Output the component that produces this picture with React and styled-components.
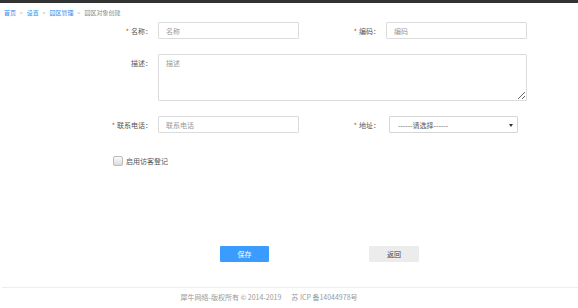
import React from "react";
import styled, { createGlobalStyle } from "styled-components";

const Global = createGlobalStyle`
  html, body { margin: 0; padding: 0; background: #fff; }
  body { font-family: "Noto Sans CJK SC", "Noto Sans", sans-serif; }
  * { box-sizing: border-box; }
`;

const Page = styled.div`
  width: 578px;
  height: 308px;
  display: flex;
  flex-direction: column;
  overflow: hidden;
`;

const TopBar = styled.div`
  height: 3px;
  background: #333;
`;

const Crumbs = styled.div`
  height: 19px;
  line-height: 20px;
  padding-left: 4px;
  font-size: 6px;
  color: #888;
  display: flex;
  align-items: center;
`;

const CrumbLink = styled.a`
  color: #2b8ff0;
  text-decoration: none;
`;

const Sep = styled.span`
  color: #999;
  margin: 0 4px;
  font-size: 5px;
`;

const Form = styled.div`
  display: flex;
  flex-direction: column;
`;

const Row = styled.div`
  display: flex;
  align-items: ${(p) => (p.$top ? "flex-start" : "center")};
  margin-top: ${(p) => p.$mt || 0}px;
`;

const Label = styled.label`
  width: ${(p) => p.$w}px;
  text-align: right;
  font-size: 7px;
  color: #555;
  margin-right: ${(p) => p.$gap}px;
  padding-top: ${(p) => (p.$top ? 4 : 0)}px;
  white-space: nowrap;
`;

const Star = styled.span`
  color: #e53935;
  margin-right: 2px;
`;

const Input = styled.input`
  width: ${(p) => p.$w}px;
  height: 17px;
  border: 1px solid #dcdcdc;
  border-radius: 1px;
  padding: 0 7px;
  font-size: 7px;
  font-family: inherit;
  color: #333;
  outline: none;
  &::placeholder { color: #999; }
`;

const TextArea = styled.textarea`
  width: 369px;
  height: 47px;
  border: 1px solid #dcdcdc;
  border-radius: 1px;
  padding: 3px 7px;
  font-size: 7px;
  font-family: inherit;
  resize: vertical;
  outline: none;
  &::placeholder { color: #999; }
`;

const SelectBox = styled.div`
  position: relative;
  width: 129px;
  height: 17px;
  border: 1px solid #d6d6d6;
  border-radius: 1px;
  font-size: 7px;
  color: #555;
  display: flex;
  align-items: center;
  padding-left: 8px;
`;

const Caret = styled.span`
  position: absolute;
  right: 4px;
  top: 7px;
  width: 0;
  height: 0;
  border-left: 2px solid transparent;
  border-right: 2px solid transparent;
  border-top: 3px solid #333;
`;

const CheckRow = styled.div`
  display: flex;
  align-items: center;
  margin-top: 23px;
  padding-left: 113px;
  height: 10px;
`;

const Box = styled.span`
  width: 10px;
  height: 10px;
  border: 1px solid #bbb;
  border-radius: 2px;
  background: linear-gradient(#fafafa, #dcdcdc);
  margin-right: 3px;
`;

const CheckText = styled.span`
  font-size: 7px;
  color: #555;
`;

const Buttons = styled.div`
  display: flex;
  margin-top: 80px;
  padding-left: 220px;
  gap: 100px;
`;

const Btn = styled.button`
  width: ${(p) => p.$w}px;
  height: 16px;
  border: none;
  border-radius: 1px;
  font-size: 7px;
  font-family: inherit;
  padding: 0;
  background: ${(p) => (p.$primary ? "#3a9cff" : "#ececec")};
  color: ${(p) => (p.$primary ? "#fff" : "#444")};
`;

const Footer = styled.div`
  margin-top: 25px;
  margin-left: 2px;
  border-top: 1px solid #eeeeee;
  height: 19px;
  line-height: 18px;
  text-align: center;
  font-size: 7px;
  color: #999;
  padding-right: 42px;
`;

const Gap = styled.span`
  display: inline-block;
  width: 10px;
`;

export default function App() {
  return (
    <Page>
      <Global />
      <TopBar />
      <Crumbs>
        <CrumbLink href="#">首页</CrumbLink>
        <Sep>&gt;</Sep>
        <CrumbLink href="#">设置</CrumbLink>
        <Sep>&gt;</Sep>
        <CrumbLink href="#">园区管理</CrumbLink>
        <Sep>&gt;</Sep>
        <span>园区对象创建</span>
      </Crumbs>
      <Form>
        <Row>
          <Label $w={152} $gap={6}><Star>*</Star>名称：</Label>
          <Input $w={141} placeholder="名称" />
          <Label $w={81} $gap={6}><Star>*</Star>编码：</Label>
          <Input $w={141} placeholder="编码" />
        </Row>
        <Row $mt={15} $top>
          <Label $w={152} $gap={6} $top>描述：</Label>
          <TextArea placeholder="描述" />
        </Row>
        <Row $mt={15}>
          <Label $w={152} $gap={6}><Star>*</Star>联系电话：</Label>
          <Input $w={141} placeholder="联系电话" />
          <Label $w={81} $gap={9}><Star>*</Star>地址：</Label>
          <SelectBox>
            ------请选择------
            <Caret />
          </SelectBox>
        </Row>
        <CheckRow>
          <Box />
          <CheckText>启用访客登记</CheckText>
        </CheckRow>
        <Buttons>
          <Btn $primary $w={49}>保存</Btn>
          <Btn $w={50}>返回</Btn>
        </Buttons>
      </Form>
      <Footer>
        犀牛网络-版权所有 © 2014-2019<Gap />苏 ICP 备14044978号
      </Footer>
    </Page>
  );
}
